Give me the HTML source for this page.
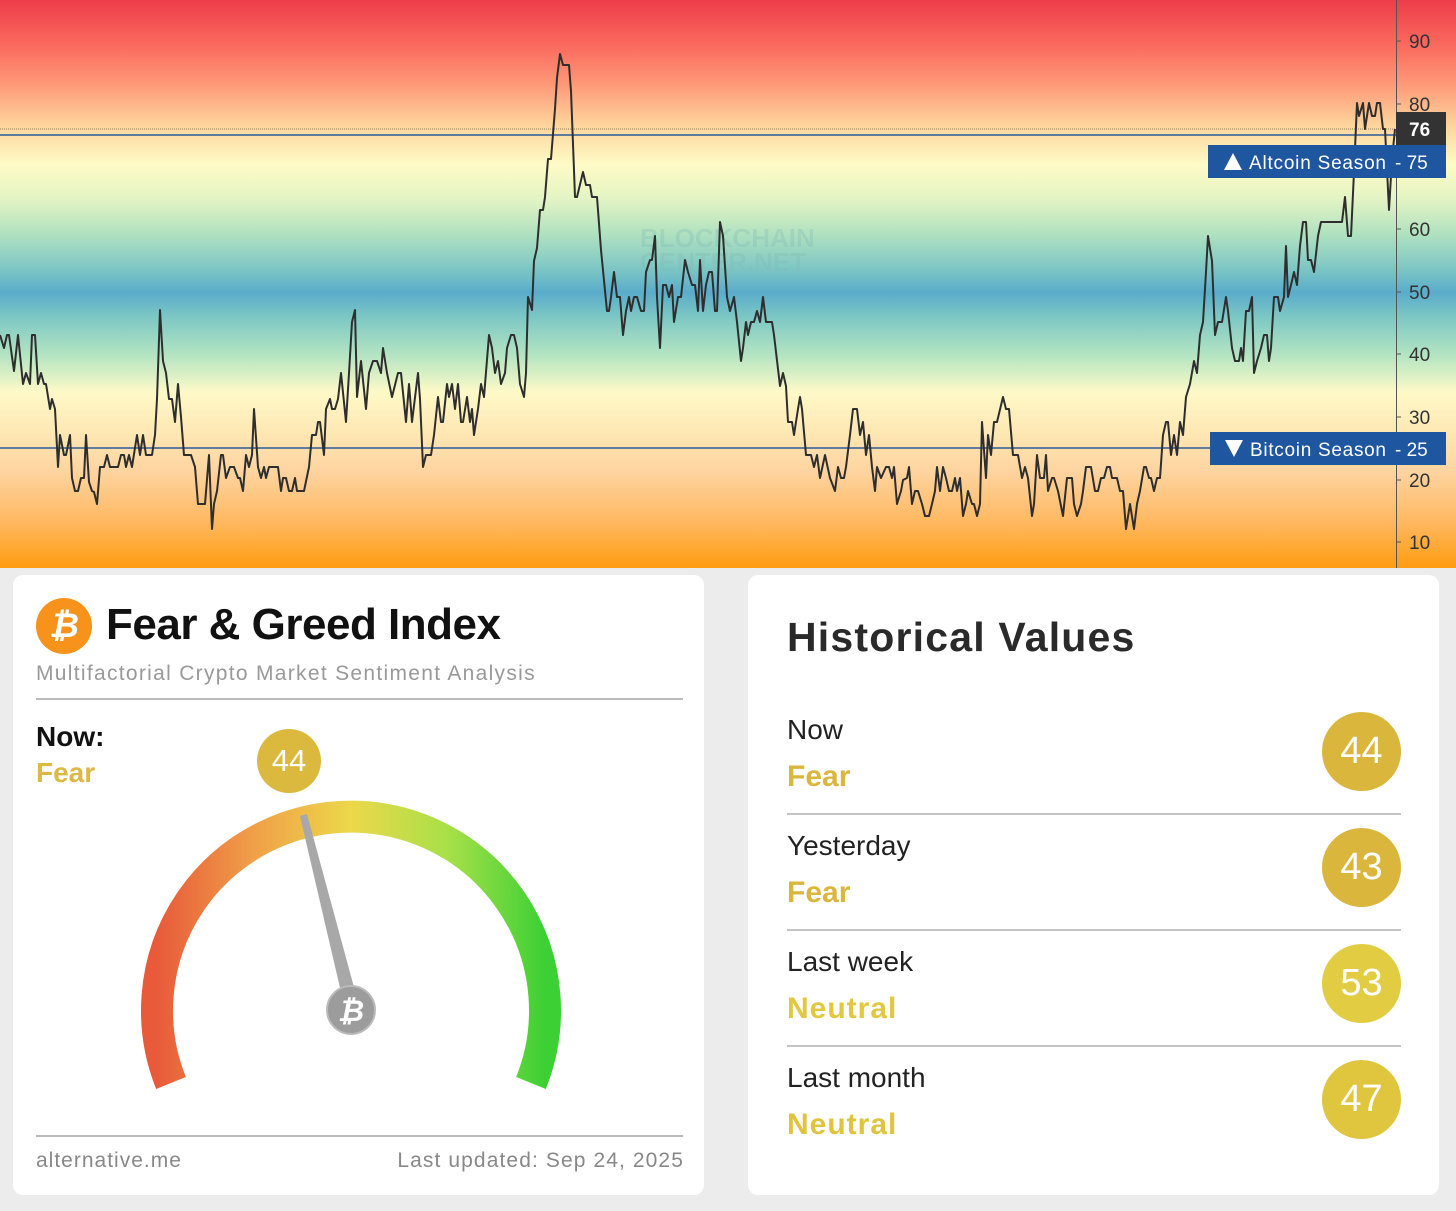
<!DOCTYPE html>
<html><head><meta charset="utf-8"><style>
*{margin:0;padding:0;box-sizing:border-box}
body{width:1456px;height:1211px;background:#ececec;position:relative;overflow:hidden;font-family:"Liberation Sans",sans-serif}
.abs{position:absolute;white-space:nowrap}
.card{position:absolute;background:#fff;border-radius:10px}
.circ{position:absolute;border-radius:50%;color:#fff;text-align:center}
</style></head><body>
<svg class="abs" style="left:0;top:0" width="1456" height="568">
<defs>
<linearGradient id="bg" x1="0" y1="0" x2="0" y2="1">
<stop offset="0" stop-color="#ee3c4a"/>
<stop offset="0.08" stop-color="#fa6a5e"/>
<stop offset="0.15" stop-color="#fe9a78"/>
<stop offset="0.22" stop-color="#fed49c"/>
<stop offset="0.29" stop-color="#fefbc6"/>
<stop offset="0.35" stop-color="#e4f4c4"/>
<stop offset="0.41" stop-color="#b2e2c0"/>
<stop offset="0.47" stop-color="#80c8c4"/>
<stop offset="0.515" stop-color="#5aaccb"/>
<stop offset="0.56" stop-color="#7ec8c4"/>
<stop offset="0.63" stop-color="#b8e6c2"/>
<stop offset="0.69" stop-color="#fef9c8"/>
<stop offset="0.76" stop-color="#fee8b4"/>
<stop offset="0.83" stop-color="#fed4a0"/>
<stop offset="0.92" stop-color="#ffb860"/>
<stop offset="1" stop-color="#ff9c10"/>
</linearGradient>
</defs>
<rect width="1456" height="568" fill="url(#bg)"/>
<text x="640" y="247" font-family="Liberation Sans" font-size="26" font-weight="bold" fill="#7fb9b4" opacity="0.3">BLOCKCHAIN</text>
<text x="640" y="271" font-family="Liberation Sans" font-size="26" font-weight="bold" fill="#7fb9b4" opacity="0.3">CENTER.NET</text>
<line x1="0" y1="129" x2="1396" y2="129" stroke="#8a8070" stroke-width="1" stroke-dasharray="1,1"/>
<line x1="0" y1="135" x2="1396" y2="135" stroke="#2b5a9a" stroke-width="1.5"/>
<line x1="0" y1="448" x2="1396" y2="448" stroke="#2b5a9a" stroke-width="1.5"/>
<polyline fill="none" stroke="#2e2e2e" stroke-width="2" stroke-linejoin="round" points="0,335 4,348 7,335 9,335 14,371 18,335 23,384 26,373 30,384 32,335 35,335 38,384 41,373 44,384 46,384 50,409 52,399 55,409 58,467 60,435 64,455 66,455 70,435 72,478 75,491 78,491 81,478 84,478 86,435 89,482 92,491 94,492 97,504 100,467 104,467 107,455 110,467 118,467 121,455 124,455 126,467 129,455 132,467 137,435 140,455 143,435 146,455 152,455 155,435 157,399 160,310 163,361 166,373 169,399 172,399 175,422 178,384 181,417 184,455 191,455 195,467 198,504 205,504 209,455 212,529 214,504 217,491 221,455 223,455 226,478 230,467 234,467 238,478 240,478 243,491 246,455 249,467 252,455 254,409 258,467 261,478 264,467 266,478 269,467 278,467 281,491 283,478 286,478 289,491 292,491 295,478 297,491 304,491 309,467 312,435 316,435 318,422 320,422 324,455 326,409 330,399 332,409 335,409 338,399 341,373 346,422 349,373 352,322 355,310 357,397 361,361 366,409 369,373 373,361 377,361 381,373 383,348 387,373 392,397 398,373 401,373 406,422 409,384 412,422 418,373 420,399 423,467 426,455 431,455 434,435 438,397 441,422 443,422 447,384 449,397 452,384 455,409 458,384 461,422 463,422 467,397 470,422 472,409 474,435 478,409 481,384 484,397 489,335 492,348 495,373 498,361 501,384 505,373 507,348 511,335 514,335 517,348 520,384 524,397 526,373 528,297 532,310 534,261 537,248 540,210 543,210 545,197 548,159 551,159 555,109 557,78 560,54 563,65 569,65 571,91 575,197 577,197 583,172 586,185 590,185 592,197 597,197 601,250 607,311 609,311 611,297 614,272 617,297 620,297 623,335 626,311 629,297 631,311 634,297 637,297 641,311 644,311 646,272 650,260 652,260 655,236 657,297 660,348 663,285 666,285 669,297 672,285 674,322 678,297 681,297 685,260 688,272 692,285 695,285 698,311 700,260 703,311 706,285 709,272 712,272 715,311 717,311 720,222 723,236 727,297 730,311 734,297 737,322 741,361 743,348 746,322 748,335 751,322 754,322 757,311 760,322 763,297 766,322 772,322 774,335 780,386 783,373 786,386 788,422 792,422 794,435 798,409 800,397 802,409 806,455 811,455 814,467 817,455 820,478 825,455 830,478 835,491 838,467 841,478 844,478 846,467 850,435 853,409 857,409 860,435 863,422 866,455 869,435 872,467 875,491 877,467 881,478 886,467 889,467 892,478 894,467 897,504 901,491 903,480 907,478 909,467 912,504 915,491 918,491 922,504 925,516 929,516 932,504 935,491 937,467 940,491 943,467 946,478 949,491 952,491 955,478 957,491 960,478 963,516 966,504 968,491 972,504 974,504 977,516 980,504 982,422 986,478 988,435 991,455 994,422 997,422 1003,397 1006,409 1009,409 1013,455 1018,455 1022,478 1025,467 1028,478 1032,516 1034,504 1037,455 1040,478 1044,478 1046,455 1048,491 1052,478 1054,478 1058,491 1063,516 1067,478 1072,478 1074,504 1077,516 1081,504 1083,491 1086,467 1091,467 1095,491 1098,491 1101,478 1104,478 1107,467 1110,467 1112,478 1117,478 1120,491 1123,491 1126,529 1130,504 1134,529 1137,504 1140,491 1144,467 1146,467 1149,478 1151,478 1154,491 1157,478 1160,478 1163,435 1166,422 1168,422 1171,455 1174,435 1177,455 1180,422 1183,435 1186,397 1190,384 1194,361 1197,373 1200,335 1203,322 1206,272 1208,236 1212,261 1215,335 1218,322 1222,322 1226,297 1228,311 1232,348 1235,361 1239,361 1241,348 1243,361 1246,311 1249,311 1252,297 1254,373 1257,361 1261,348 1264,335 1267,335 1269,361 1271,348 1274,297 1278,297 1280,311 1284,297 1286,246 1288,297 1291,285 1294,272 1297,285 1300,246 1303,222 1306,222 1308,260 1311,260 1314,272 1318,236 1321,222 1342,222 1345,197 1348,236 1351,236 1354,172 1357,103 1359,116 1363,103 1365,129 1369,103 1372,116 1375,116 1377,103 1380,103 1383,129 1385,129 1389,210 1392,159 1395,129"/>
<line x1="1396.5" y1="0" x2="1396.5" y2="568" stroke="#555" stroke-width="1"/>
<g stroke="#555" stroke-width="1">
<line x1="1396" y1="41" x2="1401" y2="41"/><line x1="1396" y1="104" x2="1401" y2="104"/><line x1="1396" y1="229" x2="1401" y2="229"/><line x1="1396" y1="292" x2="1401" y2="292"/><line x1="1396" y1="354" x2="1401" y2="354"/><line x1="1396" y1="417" x2="1401" y2="417"/><line x1="1396" y1="480" x2="1401" y2="480"/><line x1="1396" y1="542" x2="1401" y2="542"/>
</g>
<g font-family="Liberation Sans" font-size="19" fill="#333">
<text x="1409" y="48">90</text><text x="1409" y="111">80</text><text x="1409" y="236">60</text><text x="1409" y="299">50</text><text x="1409" y="361">40</text><text x="1409" y="424">30</text><text x="1409" y="487">20</text><text x="1409" y="549">10</text>
</g>
<rect x="1396" y="112" width="50" height="33" fill="#333"/>
<text x="1409" y="136" font-family="Liberation Sans" font-size="19" font-weight="bold" fill="#fff">76</text>
<rect x="1208" y="145" width="238" height="33" fill="#1f56a0"/>
<polygon points="1224,170 1233,153 1242,170" fill="#fff"/>
<text x="1249" y="169" font-family="Liberation Sans" font-size="19" fill="#fff" textLength="137">Altcoin Season</text>
<text x="1395" y="169" font-family="Liberation Sans" font-size="19" fill="#fff">-  75</text>
<rect x="1210" y="432" width="236" height="33" fill="#1f56a0"/>
<polygon points="1225,440 1243,440 1234,457" fill="#fff"/>
<text x="1250" y="456" font-family="Liberation Sans" font-size="19" fill="#fff" textLength="136">Bitcoin Season</text>
<text x="1395" y="456" font-family="Liberation Sans" font-size="19" fill="#fff">-  25</text>
</svg>

<div class="card" style="left:13px;top:575px;width:691px;height:620px"></div>
<div class="card" style="left:748px;top:575px;width:691px;height:620px"></div>

<div class="circ" style="left:36px;top:598px;width:56px;height:56px;background:#f7931a;font-size:34px;line-height:56px;font-weight:bold;font-style:italic">₿</div>
<div class="abs" style="left:106px;top:600px;font-size:44px;font-weight:bold;color:#111;letter-spacing:-0.5px">Fear &amp; Greed Index</div>
<div class="abs" style="left:36px;top:662px;font-size:21px;color:#999;letter-spacing:1.3px">Multifactorial Crypto Market Sentiment Analysis</div>
<div class="abs" style="left:36px;top:698px;width:647px;height:2px;background:#bbb"></div>
<div class="abs" style="left:36px;top:721px;font-size:28px;font-weight:bold;color:#111">Now:</div>
<div class="abs" style="left:36px;top:757px;font-size:28px;font-weight:bold;color:#ddb944">Fear</div>
<div class="circ" style="left:257px;top:729px;width:64px;height:64px;background:#dbb93e;font-size:31px;line-height:64px">44</div>

<svg class="abs" style="left:120px;top:780px" width="470" height="330">
<defs><linearGradient id="gg" x1="0" y1="0" x2="1" y2="0">
<stop offset="0" stop-color="#e85a3a"/><stop offset="0.25" stop-color="#f0a048"/><stop offset="0.5" stop-color="#ecd84a"/><stop offset="0.75" stop-color="#a8e048"/><stop offset="1" stop-color="#3cd035"/>
</linearGradient></defs>
<path d="M 51 303 A 194 194 0 1 1 411 303" fill="none" stroke="url(#gg)" stroke-width="32"/>
<polygon points="180,36 187,34 238,222 224,225" fill="#a8a8a8"/>
<circle cx="231" cy="230" r="24" fill="#9c9c9c" stroke="#bbb" stroke-width="2"/>
<text x="231" y="241" text-anchor="middle" font-family="Liberation Sans" font-size="30" font-weight="bold" font-style="italic" fill="#fff">₿</text>
</svg>

<div class="abs" style="left:36px;top:1135px;width:647px;height:2px;background:#bbb"></div>
<div class="abs" style="left:36px;top:1149px;font-size:21px;color:#888;letter-spacing:1px">alternative.me</div>
<div class="abs" style="left:334px;top:1149px;width:350px;text-align:right;font-size:21px;color:#888;letter-spacing:1.1px">Last updated: Sep 24, 2025</div>

<div class="abs" style="left:787px;top:614px;font-size:41px;font-weight:bold;color:#2a2a2a;letter-spacing:1.2px">Historical Values</div>

<div class="abs" style="left:787px;top:714px;font-size:28px;color:#222">Now</div>
<div class="abs" style="left:787px;top:760px;font-size:30px;font-weight:bold;color:#dbb63c">Fear</div>
<div class="circ" style="left:1322px;top:712px;width:79px;height:79px;background:#dbb63c;font-size:38px;line-height:79px">44</div>
<div class="abs" style="left:787px;top:813px;width:614px;height:2px;background:#c4c4c4"></div>

<div class="abs" style="left:787px;top:830px;font-size:28px;color:#222">Yesterday</div>
<div class="abs" style="left:787px;top:876px;font-size:30px;font-weight:bold;color:#dbb63c">Fear</div>
<div class="circ" style="left:1322px;top:828px;width:79px;height:79px;background:#dbb63c;font-size:38px;line-height:79px">43</div>
<div class="abs" style="left:787px;top:929px;width:614px;height:2px;background:#c4c4c4"></div>

<div class="abs" style="left:787px;top:946px;font-size:28px;color:#222">Last week</div>
<div class="abs" style="left:787px;top:992px;font-size:30px;font-weight:bold;color:#e2c83e;letter-spacing:1px">Neutral</div>
<div class="circ" style="left:1322px;top:944px;width:79px;height:79px;background:#e2cc42;font-size:38px;line-height:79px">53</div>
<div class="abs" style="left:787px;top:1045px;width:614px;height:2px;background:#c4c4c4"></div>

<div class="abs" style="left:787px;top:1062px;font-size:28px;color:#222">Last month</div>
<div class="abs" style="left:787px;top:1108px;font-size:30px;font-weight:bold;color:#e0c43e;letter-spacing:1px">Neutral</div>
<div class="circ" style="left:1322px;top:1060px;width:79px;height:79px;background:#e0c63e;font-size:38px;line-height:79px">47</div>
</body></html>
